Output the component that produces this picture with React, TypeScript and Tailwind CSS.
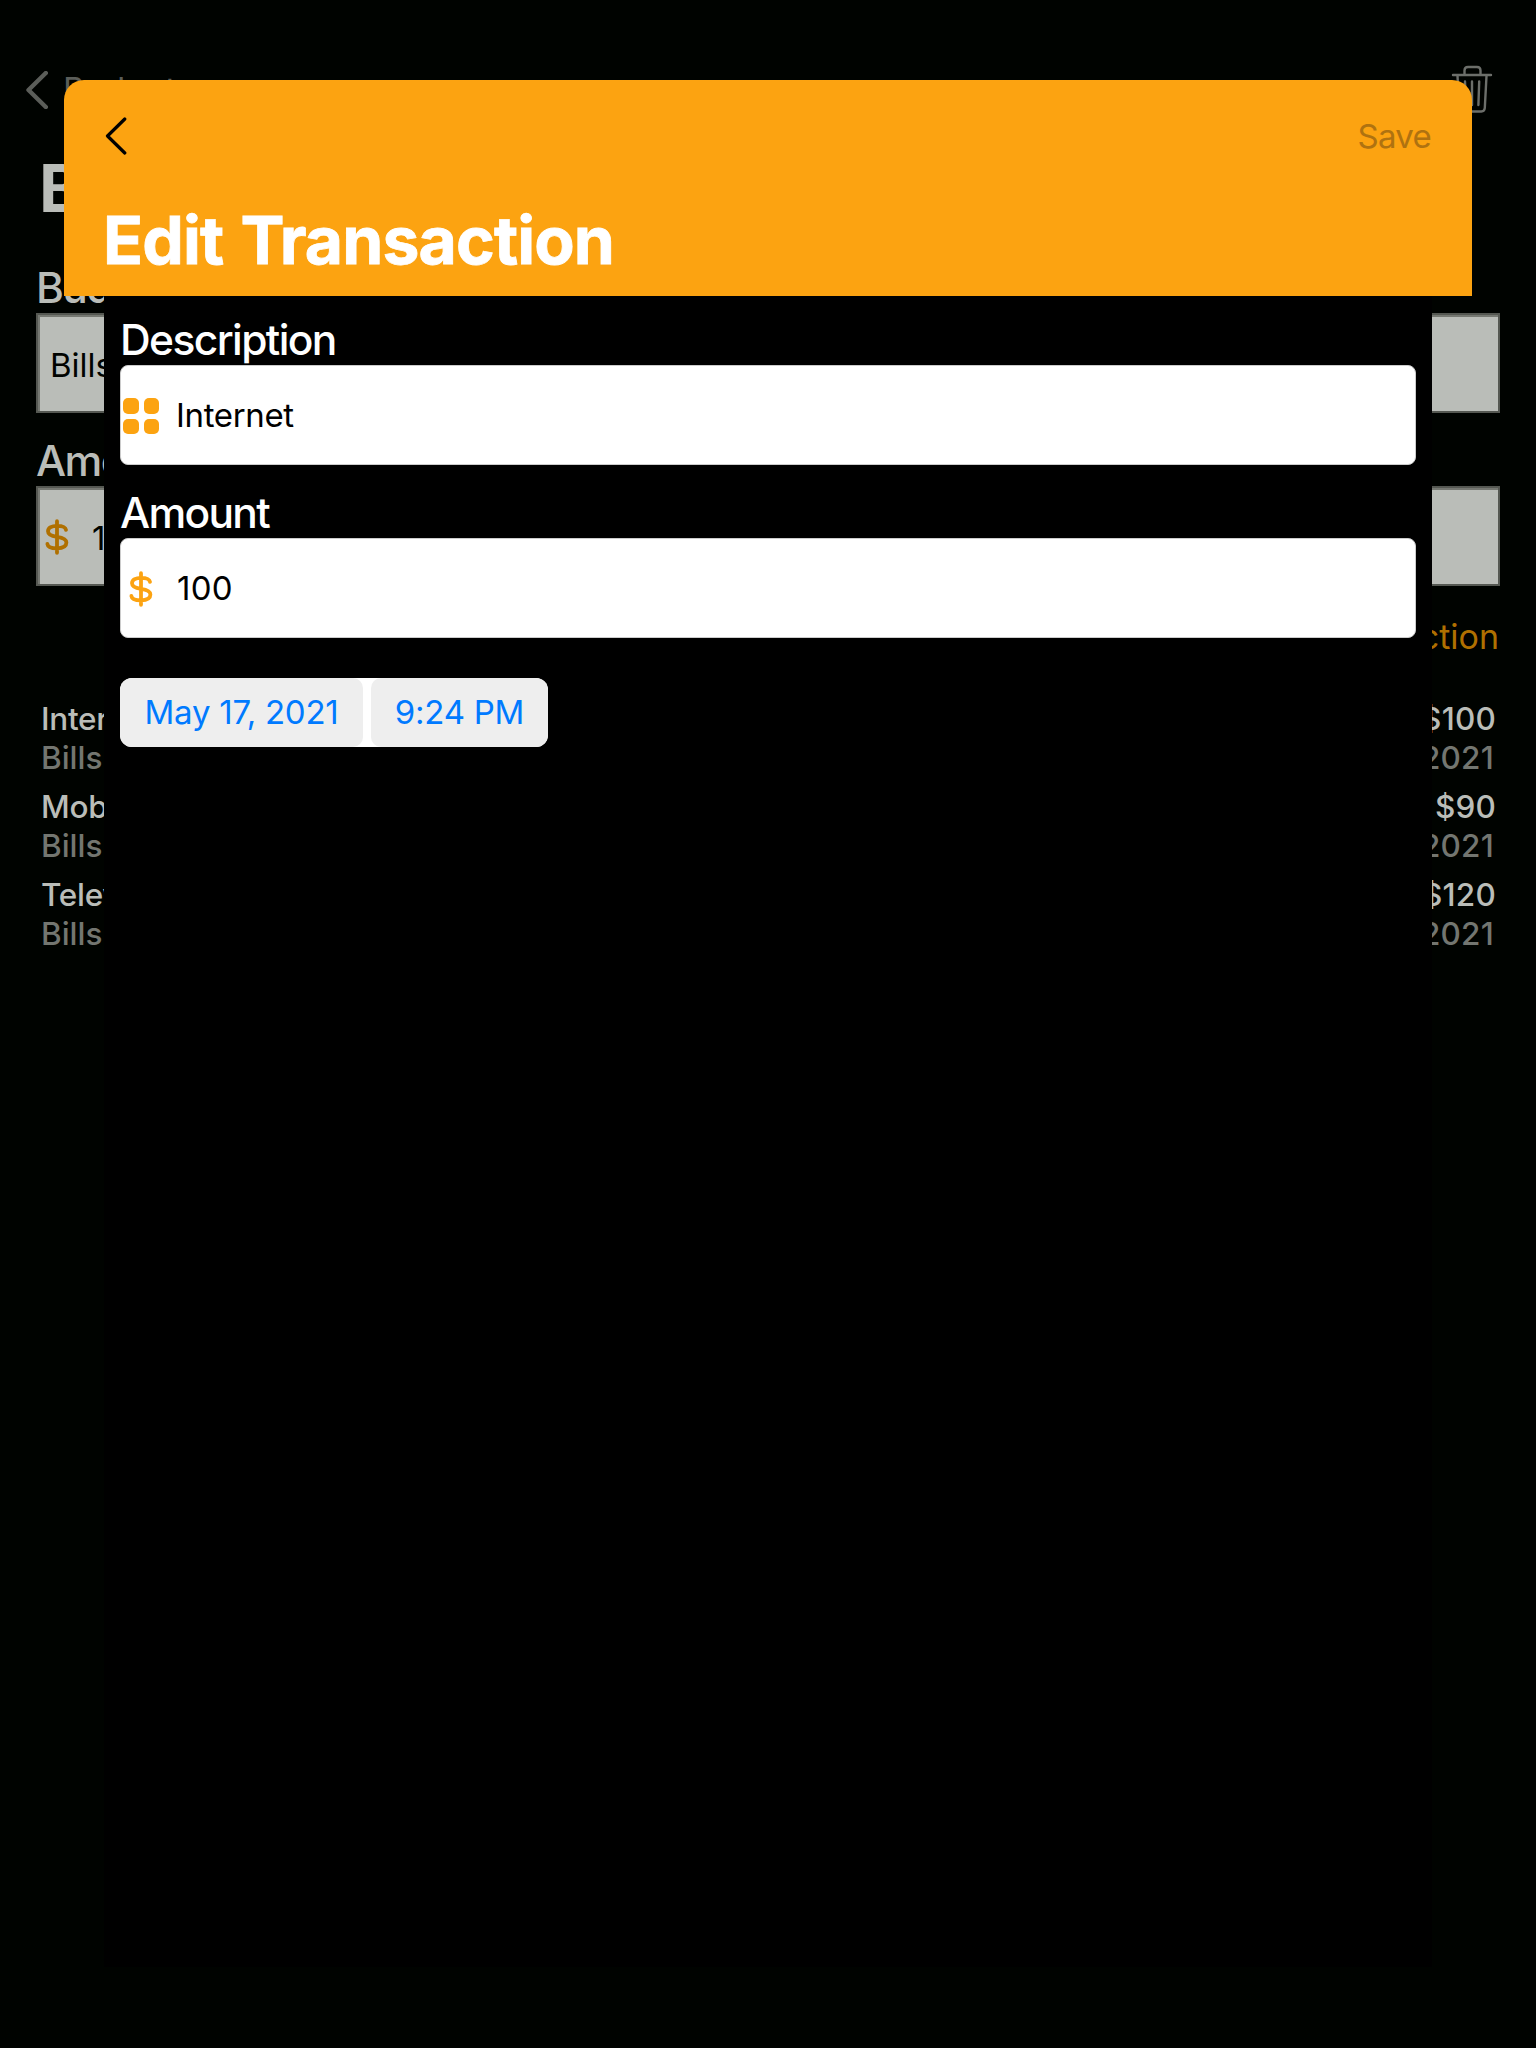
const ROWS = [
  { name: "Internet", amount: "$100" },
  { name: "Mobile", amount: "$90" },
  { name: "Television", amount: "$120" },
];

function Chevron({ className, stroke }: { className: string; stroke: number }) {
  return (
    <svg className={className} viewBox="0 0 22 38" fill="none" stroke="currentColor" strokeWidth={stroke} strokeLinecap="round" strokeLinejoin="round">
      <path d="M19.800 2 2.500 19 19.800 36" />
    </svg>
  );
}

function Trash() {
  return (
    <svg className="-mt-[3px] h-[48px] w-[42px]" viewBox="0 0 42 48" fill="none" stroke="currentColor" strokeWidth="2.400" strokeLinecap="round" strokeLinejoin="round">
      <path d="M2 10h38M13.500 9.500V5.500q0-3.500 3.500-3.500h9q3.500 0 3.500 3.500v4M6.500 11l1.700 32q.3 3.500 3.500 3.500h18.600q3.200 0 3.500-3.500l1.700-32M14 16.500l.8 23.500M21 16.500v23.500M28.200 16.500l-.8 23.500" />
    </svg>
  );
}

function Dollar() {
  return (
    <svg className="h-[36px] w-[24px]" viewBox="0 0 24 36" fill="none" stroke="currentColor" strokeWidth="3.800" strokeLinecap="round" strokeLinejoin="round">
      <path d="M12 2.200v31.600M21 10.800C20.500 8 17 6.800 12 6.800S3 8.600 3 12.200 6 17 12 17.800s9.400 2.200 9.400 5.800-3.400 5.700-9.400 5.700S2.700 27.800 2.400 25" />
    </svg>
  );
}

function Grid() {
  return (
    <div className="mt-[2px] grid h-9 w-9 grid-cols-2 gap-[5px]">
      <i className="rounded-[5px] bg-[#fca311]" />
      <i className="rounded-[5px] bg-[#fca311]" />
      <i className="rounded-[5px] bg-[#fca311]" />
      <i className="rounded-[5px] bg-[#fca311]" />
    </div>
  );
}

function Background() {
  return (
    <div className="flex h-full flex-col bg-[#000300] px-9">
      <div className="mt-[66px] -ml-[10px] flex h-[48px] items-center text-[#5b5e59]">
        <Chevron className="h-[38px] w-[22px]" stroke={4.4} />
        <span className="-mt-px ml-[15px] text-[33.500px] leading-[48px] text-[#5b5e59]">Budgets</span>
        <span className="mr-[7px] ml-auto text-[#6c6f6a]"><Trash /></span>
      </div>
      <h1 className="mt-[34px] ml-[3px] text-[66px] leading-[80px] font-bold text-[#babdb8]">Bills</h1>
      <div className="mt-[34px] h-[51px] text-[42.500px] leading-[51px] font-medium tracking-[-1.600px] text-[#babdb8]">Budget</div>
      <div className="flex h-[100px] items-center border-2 border-[#555852] bg-[#babdb8] pt-[6px] pl-[12px] text-[33px] text-[#000300] shadow-[inset_2px_2px_0_#767972]">Bills</div>
      <div className="mt-[22px] h-[51px] text-[42.500px] leading-[51px] font-medium tracking-[-1.600px] text-[#babdb8]">Amount</div>
      <div className="flex h-[100px] items-center border-2 border-[#555852] bg-[#babdb8] pt-px pl-[7px] text-[33px] text-[#000300] shadow-[inset_2px_2px_0_#767972]">
        <span className="text-[#b07000]"><Dollar /></span>
        <span className="mt-[5px] ml-[23px]">100</span>
      </div>
      <div className="mt-[31px] pr-px text-right text-[34px] leading-[40px] text-[#b07000]">Add Transaction</div>
      <div className="mt-[42px] px-1">
        {ROWS.map((r) => (
          <div key={r.name} className="h-[88px] text-[31.500px] leading-[39px] font-medium">
            <div className="flex justify-between text-[#babdb8]"><span className="ml-px tracking-[-0.300px]">{r.name}</span><span className="tracking-[0.200px]">{r.amount}</span></div>
            <div className="flex justify-between text-[#737670]"><span className="ml-px">Bills</span><span className="mr-[2px] tracking-[0.200px]">May 17, 2021</span></div>
          </div>
        ))}
      </div>
    </div>
  );
}

export default function App() {
  return (
    <div className="relative h-[2048px] w-[1536px] overflow-hidden font-['Inter',sans-serif]">
      <Background />
      <div className="absolute top-[80px] left-[64px] w-[1408px]">
        <header className="h-[216px] rounded-t-[20px] bg-[#fca311] px-10">
          <div className="flex h-[112px] items-center justify-between">
            <Chevron className="ml-px h-[38px] w-[22px] text-black" stroke={3.2} />
            <span className="mt-[2px] mr-px text-[33px] tracking-[-0.700px] text-[#af7210]">Save</span>
          </div>
          <h2 className="-ml-px text-[66px] leading-[96px] font-bold tracking-[-0.900px] whitespace-nowrap text-white [word-spacing:2.500px] [-webkit-text-stroke:0.800px_white]">Edit Transaction</h2>
        </header>
        <main className="mx-10 h-[1671px] bg-black px-4 pt-[18px]">
          <div className="h-[51px] text-[42.500px] leading-[51px] font-medium tracking-[-1.600px] text-white">Description</div>
          <div className="flex h-[100px] items-center rounded-lg border border-[#ccc] bg-white pl-[2px] text-[33px] text-black">
            <Grid />
            <span className="mt-[2px] ml-[17px] tracking-[-0.350px]">Internet</span>
          </div>
          <div className="mt-[22px] h-[51px] text-[42.500px] leading-[51px] font-medium tracking-[-1.700px] text-white">Amount</div>
          <div className="flex h-[100px] items-center rounded-lg border border-[#ccc] bg-white pt-[2px] pl-[8px] text-[33px] text-black">
            <span className="text-[#fca311]"><Dollar /></span>
            <span className="ml-[24px] tracking-[0.300px]">100</span>
          </div>
          <div className="mt-10 flex h-[69px] w-[428px] gap-2 overflow-hidden rounded-[12px] bg-white text-[33px] leading-[69px] tracking-[-0.250px] text-[#007aff]">
            <div className="w-[243px] rounded-r-[10px] bg-[#eee] text-center whitespace-nowrap">May 17, 2021</div>
            <div className="w-[177px] rounded-l-[10px] bg-[#eee] text-center whitespace-nowrap">9:24 PM</div>
          </div>
        </main>
      </div>
    </div>
  );
}
